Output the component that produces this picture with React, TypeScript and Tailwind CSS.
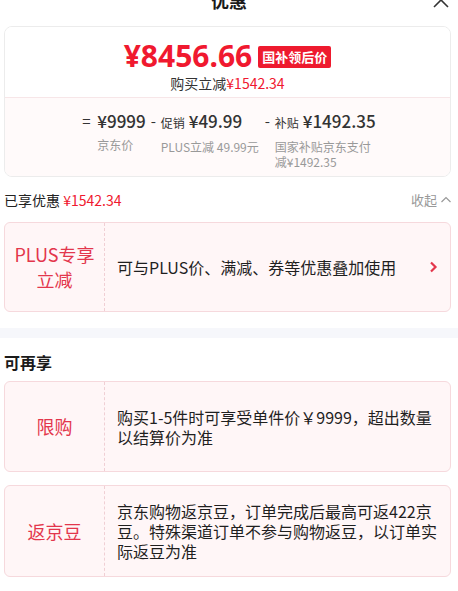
import React from "react";

const F = { fontFamily: '"Noto Sans CJK SC", "Noto Sans", sans-serif' };

function Card({ left, children, h, arrow }: { left: React.ReactNode; children: React.ReactNode; h: string; arrow?: boolean }) {
  return (
    <div className={`ml-[4px] w-[447px] ${h} flex rounded-[6px] border border-[#f6d9dd] bg-[#fff6f7]`}>
      <div className="w-[100px] shrink-0 flex items-center justify-center text-center text-[18px] leading-[25px] text-[#e3364c] border-r border-dashed border-[#f0cfd4]">
        {left}
      </div>
      <div className="flex-1 flex items-center pl-[12px] pr-[6px] text-[16px] leading-[20px] text-[#1f1f1f]">
        <div className="flex-1">{children}</div>
        {arrow && (
          <svg width="10" height="12" viewBox="0 0 10 12" className="mr-[6px]">
            <polyline points="3,1.5 7.5,6 3,10.5" fill="none" stroke="#e3364c" strokeWidth="2.2" />
          </svg>
        )}
      </div>
    </div>
  );
}

export default function App() {
  return (
    <div className="w-[458px] h-[591px] overflow-hidden bg-white" style={F}>
      <div className="relative h-[38px] -mt-[12px] flex justify-center">
        <div className="text-[18px] leading-[24px] font-bold text-[#1a1a1a]">优惠</div>
        <svg className="absolute right-[8px] top-[3px]" width="18" height="18" viewBox="0 0 18 18">
          <path d="M2 2 L16 16 M16 2 L2 16" stroke="#333" strokeWidth="1.6" fill="none" />
        </svg>
      </div>

      <div className="ml-[4px] w-[447px] rounded-[8px] border border-[#ececec] overflow-hidden">
        <div className="bg-white pt-[12px] pb-[4px] flex flex-col items-center">
          <div className="h-[34px] flex items-center">
            <span className="text-[30px] leading-[34px] font-bold text-[#f0192f]" style={{ fontFamily: '"Noto Sans", sans-serif' }}>
              ¥8456.66
            </span>
            <span className="ml-[6px] mt-[2px] h-[22px] px-[4px] rounded-[2px] bg-[#ee1a2e] text-white text-[13px] leading-[22px] font-bold">
              国补领后价
            </span>
          </div>
          <div className="text-[14px] leading-[20px] text-[#333]">
            购买立减<span className="text-[#f0192f]">¥1542.34</span>
          </div>
        </div>
        <div className="border-t border-[#f7e6e8] bg-[#fffafa] pt-[11px] pb-[7px] flex justify-center">
          <div className="flex">
            <span className="text-[15px] leading-[24px] text-[#333] w-[15px]">=</span>
            <div className="flex flex-col">
              <span className="text-[17px] leading-[24px] text-[#333] font-medium">¥9999</span>
              <span className="mt-[4px] text-[12px] leading-[15px] text-[#999]">京东价</span>
            </div>
          </div>
          <div className="flex ml-[5px]">
            <span className="text-[15px] leading-[24px] text-[#333] w-[10px]">-</span>
            <div className="flex flex-col w-[100px]">
              <span className="leading-[24px] text-[#333] whitespace-nowrap">
                <span className="text-[12px]">促销</span>
                <span className="text-[17px] font-medium ml-[4px]">¥49.99</span>
              </span>
              <span className="mt-[4px] text-[12px] leading-[15px] text-[#999] whitespace-nowrap">PLUS立减 49.99元</span>
            </div>
          </div>
          <div className="flex ml-[4px]">
            <span className="text-[15px] leading-[24px] text-[#333] w-[10px]">-</span>
            <div className="flex flex-col w-[98px]">
              <span className="leading-[24px] text-[#333] whitespace-nowrap">
                <span className="text-[12px]">补贴</span>
                <span className="text-[17px] font-medium ml-[4px]">¥1492.35</span>
              </span>
              <span className="mt-[4px] text-[12px] leading-[15px] text-[#999]">国家补贴京东支付减¥1492.35</span>
            </div>
          </div>
        </div>
      </div>

      <div className="mt-[13px] ml-[4px] w-[448px] flex items-center justify-between leading-[20px]">
        <div className="text-[14px] text-[#222]">
          已享优惠 <span className="text-[#f0192f]">¥1542.34</span>
        </div>
        <div className="flex items-center text-[13px] text-[#999]">
          收起
          <svg width="12" height="10" viewBox="0 0 12 10" className="ml-[3px]">
            <polyline points="1.5,7 6,2.5 10.5,7" fill="none" stroke="#999" strokeWidth="1.2" />
          </svg>
        </div>
      </div>

      <div className="mt-[12px]">
        <Card h="h-[90px]" left={<span>PLUS专享<br />立减</span>} arrow>
          可与PLUS价、满减、券等优惠叠加使用
        </Card>
      </div>

      <div className="mt-[16px] h-[10px] bg-[#f6f7fb]" />

      <div className="mt-[13px] ml-[4px] text-[16px] leading-[22px] font-bold text-[#1a1a1a]">可再享</div>

      <div className="mt-[8px]">
        <Card h="h-[91px]" left="限购">
          购买1-5件时可享受单件价￥9999，超出数量以结算价为准
        </Card>
      </div>
      <div className="mt-[13px]">
        <Card h="h-[92px]" left="返京豆">
          京东购物返京豆，订单完成后最高可返422京豆。特殊渠道订单不参与购物返豆，以订单实际返豆为准
        </Card>
      </div>
    </div>
  );
}
